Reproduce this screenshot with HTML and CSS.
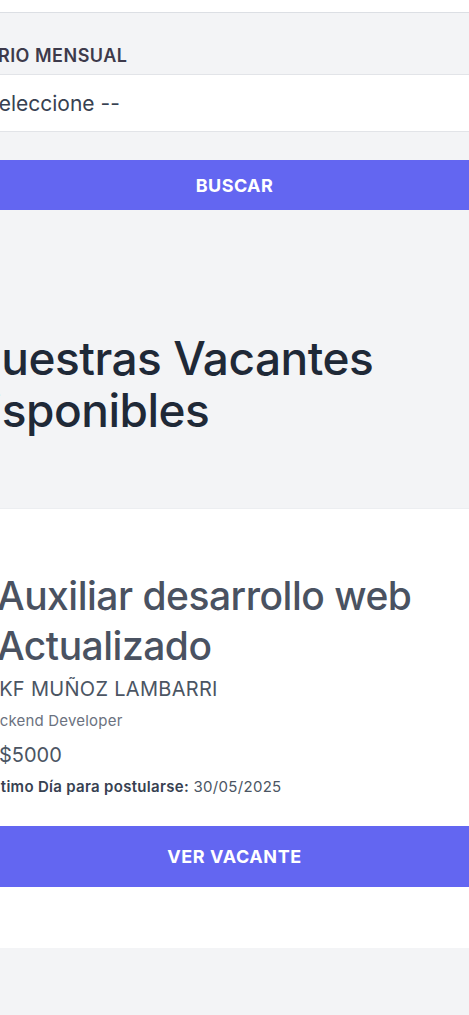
FILE: index.html
```html
<!DOCTYPE html>
<html lang="es">
<head>
<meta charset="utf-8">
<title>Vacantes</title>
<link rel="stylesheet" href="styles.css">
</head>
<body>
<div class="top"></div>
<section class="filter">
  <div class="label">SALARIO MENSUAL</div>
  <div class="select"><span class="select-text">-- Seleccione --</span></div>
  <div class="btn btn-search">BUSCAR</div>
</section>
<section class="hero">
  <h1 class="heading">Nuestras Vacantes Disponibles</h1>
</section>
<section class="card">
  <div class="card-body">
    <h2 class="title">Auxiliar desarrollo web Actualizado</h2>
    <div class="company">SKF MUÑOZ LAMBARRI</div>
    <div class="area">Backend Developer</div>
    <div class="salary">$5000</div>
    <div class="deadline"><strong>Último Día para postularse:</strong> 30/05/2025</div>
  </div>
  <div class="btn btn-view">VER VACANTE</div>
</section>
</body>
</html>
```
FILE: styles.css
```css
* { box-sizing: border-box; }
html, body { margin: 0; padding: 0; }
body {
  background: #f3f4f6;
  font-family: Inter, "Noto Sans", sans-serif;
  overflow: hidden;
  width: 469px;
}
.top {
  height: 13px;
  background: #fff;
  border-bottom: 1px solid #dcdfe4;
}
.filter {
  padding-top: 31px;
}
.label {
  font-size: 18px;
  font-weight: 600;
  color: #3d3a4b;
  line-height: 24px;
  margin-left: -52px;
  letter-spacing: 0.5px;
  white-space: nowrap;
  margin-bottom: 6px;
}
.select {
  background: #fff;
  border-top: 1px solid #e2e4e8;
  border-bottom: 1px solid #e2e4e8;
  height: 58px;
  display: flex;
  align-items: center;
}
.select-text {
  font-size: 21px;
  color: #374151;
  margin-left: -40px;
  white-space: nowrap;
}
.btn {
  background: #6366f1;
  color: #fff;
  font-weight: 700;
  display: flex;
  align-items: center;
  justify-content: center;
}
.btn-search {
  margin-top: 28px;
  height: 50px;
  font-size: 18px;
  letter-spacing: 0.4px;
}
.hero {
  padding: 122px 0 72px;
  border-bottom: 1px solid #eceef1;
}
.heading {
  margin: 0 0 0 -42px;
  text-indent: 9px;
  font-size: 46px;
  line-height: 52px;
  font-weight: 500;
  color: #1f2937;
  letter-spacing: -0.5px;
}
.card {
  background: #fff;
  padding-top: 62px;
  padding-bottom: 61px;
}
.card-body {
  padding-bottom: 28px;
}
.title {
  margin: 0 0 0 -3px;
  font-size: 39px;
  line-height: 50px;
  font-weight: 500;
  color: #4a5261;
  letter-spacing: -0.5px;
}
.company {
  font-size: 20px;
  color: #4b5563;
  margin-left: -14px;
  line-height: 28px;
  letter-spacing: 0.3px;
  margin-top: 4px;
  white-space: nowrap;
}
.area {
  font-size: 15px;
  color: #6b7280;
  margin-left: -19px;
  letter-spacing: 0.2px;
  line-height: 22px;
  margin-top: 7px;
}
.salary {
  font-size: 20px;
  color: #4b5563;
  margin-left: -1px;
  line-height: 28px;
  margin-top: 9px;
}
.deadline {
  font-size: 15px;
  color: #4b5563;
  margin-left: -15px;
  letter-spacing: 0.3px;
  line-height: 22px;
  margin-top: 7px;
  white-space: nowrap;
}
.deadline strong {
  color: #374151;
  font-weight: 600;
}
.btn-view {
  height: 61px;
  font-size: 18px;
  letter-spacing: 0.6px;
}
```
